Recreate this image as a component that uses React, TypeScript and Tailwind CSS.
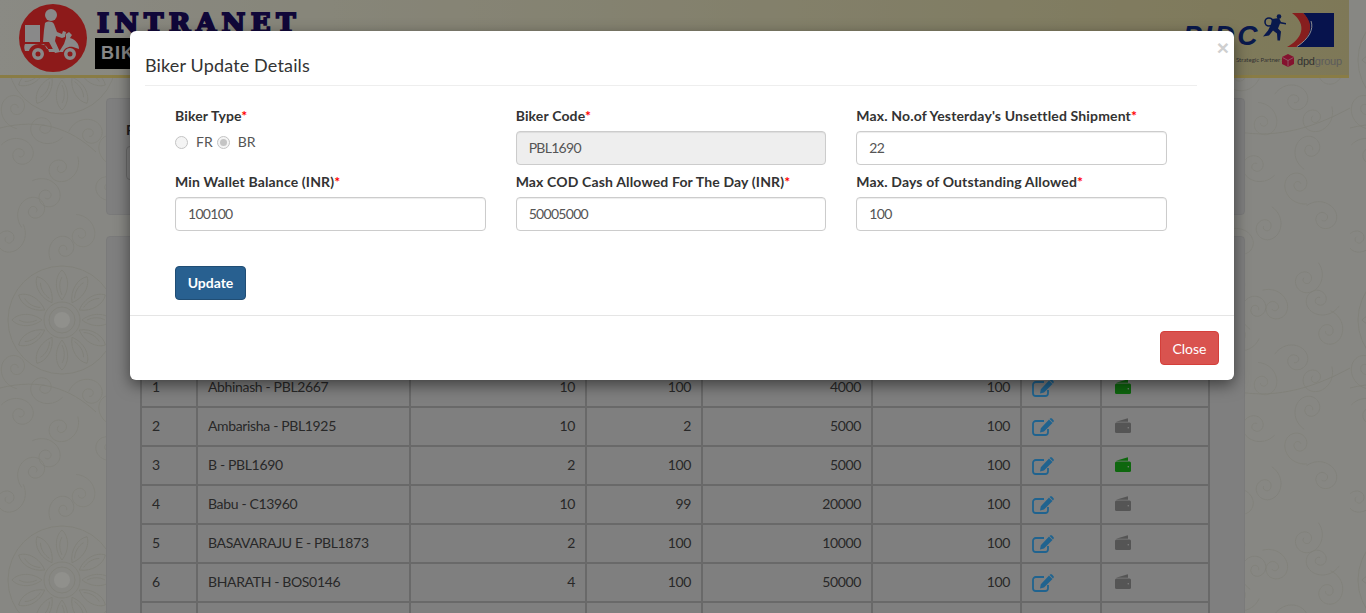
const rows = [
  { no: 1, name: 'Abhinash - PBL2667', a: 10, b: 100, c: 4000, d: 100, active: true },
  { no: 2, name: 'Ambarisha - PBL1925', a: 10, b: 2, c: 5000, d: 100, active: false },
  { no: 3, name: 'B - PBL1690', a: 2, b: 100, c: 5000, d: 100, active: true },
  { no: 4, name: 'Babu - C13960', a: 10, b: 99, c: 20000, d: 100, active: false },
  { no: 5, name: 'BASAVARAJU E - PBL1873', a: 2, b: 100, c: 10000, d: 100, active: false },
  { no: 6, name: 'BHARATH - BOS0146', a: 4, b: 100, c: 50000, d: 100, active: false },
  { no: 7, name: 'BHARATH KUMAR - PBL1702', a: 2, b: 100, c: 5000, d: 100, active: false },
]

const fields = [
  { label: 'Biker Code', value: 'PBL1690', disabled: true },
  { label: "Max. No.of Yesterday's Unsettled Shipment", value: '22' },
  { label: 'Min Wallet Balance (INR)', value: '100100' },
  { label: 'Max COD Cash Allowed For The Day (INR)', value: '50005000' },
  { label: 'Max. Days of Outstanding Allowed', value: '100' },
]

const petals = [0, 30, 60, 90, 120, 150, 180, 210, 240, 270, 300, 330]
const curls = [
  [150, 24, 0], [196, 44, 70], [230, 20, 140], [160, 80, 200], [214, 96, 30], [252, 70, 110],
  [20, 150, 40], [64, 170, 160], [110, 150, 260], [30, 210, 320], [84, 232, 90], [134, 206, 10],
  [176, 170, 220], [226, 150, 300], [190, 226, 120], [244, 214, 50], [130, 110, 170], [12, 110, 280],
  [172, 50, 300], [240, 44, 210], [186, 120, 90], [238, 120, 160], [44, 132, 220], [88, 130, 20],
  [48, 192, 60], [12, 240, 150], [110, 190, 200], [60, 250, 300], [160, 240, 40], [216, 188, 260],
]

function Paisley() {
  return (
    <svg className="absolute inset-0 h-full w-full" aria-hidden="true">
      <defs>
        <pattern id="paisley" width="270" height="260" patternUnits="userSpaceOnUse">
          <g fill="none" stroke="#d4d4c8" strokeWidth="0.8">
            <g transform="translate(62 60)">
              <circle r="8" fill="#f0f0ea" stroke="none" />
              <circle r="13" />
              <circle r="18" />
              {petals.map((p) => (
                <path key={p} transform={`rotate(${p})`} d="M0-20C-8-30-7-44 0-50 7-44 8-30 0-20M0-25C-3-31-3-38 0-43" />
              ))}
              <circle r="54" />
            </g>
            {curls.map(([x, y, r], i) => (
              <path
                key={i}
                transform={`translate(${x} ${y}) rotate(${r}) scale(0.8)`}
                d="M-22 10C-20-12 4-20 15-8 24 3 14 18 2 14-7 11-7-1 2-2 8-3 10 6 4 7"
              />
            ))}
            <path d="M120 150c30 20 40 60 20 110M108 160c28 20 34 56 18 100M0 128c40-10 70 0 96 24M150 130c40 10 80 0 120-22" />
          </g>
        </pattern>
      </defs>
      <rect width="100%" height="100%" fill="#e1e1da" />
      <rect width="100%" height="100%" fill="url(#paisley)" />
    </svg>
  )
}

function EditIcon() {
  return (
    <svg viewBox="0 0 22 18" className="h-[18px] w-[22px] text-[#36a6ee]">
      <path
        d="M16 11v3.200A2.800 2.800 0 0 1 13.200 17H3.800A2.800 2.800 0 0 1 1 14.200V5.800A2.800 2.800 0 0 1 3.800 3H12"
        fill="none"
        stroke="currentColor"
        strokeWidth="1.800"
      />
      <path d="M17 1.500 20.500 5 12 13.500 8 14.500 8.800 10.200zM18 .6c.6-.6 1.400-.6 2 0l1.400 1.400c.6.600.6 1.400 0 2l-.4.4-3.400-3.400z" fill="currentColor" />
    </svg>
  )
}

function WalletIcon({ active }: { active: boolean }) {
  return (
    <svg viewBox="0 0 16 15" className={`h-[15px] w-[16px] ${active ? 'text-[#18ac18]' : 'text-[#8e8e8e]'}`}>
      <path d="M1 3.800 12 .4c.6-.2 1 .1 1 .7v2.700z" fill="currentColor" />
      <rect x="0" y="4.500" width="16" height="10.500" rx="1.500" fill="currentColor" />
      <circle cx="13.300" cy="9.800" r="0.800" fill="#d4d4d4" />
    </svg>
  )
}

function BikerLogo() {
  return (
    <svg viewBox="0 0 68 68" className="h-[68px] w-[68px] shrink-0">
      <circle cx="34" cy="34" r="34" fill="#ec2c2c" />
      <g fill="#e4e4e4">
        <rect x="6" y="21" width="15" height="17" />
        <circle cx="32" cy="11" r="6" />
        <path d="M26 19c3-2 7-2 9 1l3 8 5 2 1-3 3 1-1 5-3 1-6-2-1 5 5 11-5 1-6-11H24l1-12z" />
        <path d="M6 40h19l3 5h9l1 3H30c-1-6-5-8-10-8-5 0-9 3-10 7H6c-1-3-1-5 0-7z" />
        <path d="M47 30l3-2 3 3-2 3c6 2 9 6 9 11l-6-2c-5-1-9 2-10 5h-4l5-8 2-6z" />
        <path fillRule="evenodd" d="M19 44a6 6 0 1 0 0 12 6 6 0 0 0 0-12zm0 3.500a2.500 2.500 0 1 1 0 5 2.500 2.500 0 0 1 0-5zM51 44a6 6 0 1 0 0 12 6 6 0 0 0 0-12zm0 3.500a2.500 2.500 0 1 1 0 5 2.500 2.500 0 0 1 0-5z" />
      </g>
    </svg>
  )
}

function PartnerLogo() {
  return (
    <div className="relative h-[75px] w-[149px] shrink-0">
      <span className="absolute left-[-2px] top-[22px] font-['Liberation_Sans',sans-serif] text-[28px] leading-none font-bold italic tracking-[2.500px] text-[#0f2a80]">
        PIDC
      </span>
      <svg viewBox="0 0 23 27" className="absolute left-[78px] top-[14px] h-[27px] w-[23px]">
        <circle cx="16" cy="2.500" r="2.300" fill="#0f2a80" />
        <circle cx="6" cy="8" r="4" fill="none" stroke="#0f2a80" strokeWidth="1.600" />
        <path d="M9 5l7-1 2 4 5 1v1.500l-6-1-2 5 3 3-1 9h-2.500l-.5-7-4-3-4 5-6 1 5-6 3-6z" fill="#0f2a80" />
      </svg>
      <svg viewBox="0 0 48 34" className="absolute left-[101px] top-[13px] h-[34px] w-[48px]">
        <path d="M17 0H48V34H10C22 26 30 14 17 0z" fill="#0c2080" />
        <path d="M6 0H17C30 12 24 26 10 34H1C16 26 22 12 6 0z" fill="#e23232" />
        <path d="M11 33.500C23 26 28 16 25 8" fill="none" stroke="#ffffff" strokeWidth="0.900" />
      </svg>
      <span className="absolute left-[51px] top-[57px] text-[6px] leading-none whitespace-nowrap text-[#555555]">
        Strategic Partner :
      </span>
      <svg viewBox="0 0 12 13" className="absolute left-[97px] top-[54px] h-[13px] w-[12px]">
        <path d="M6 0l6 3v7l-6 3-6-3V3z" fill="#dc1f4e" />
        <path d="M6 6.500v6M0.500 3.500L6 6.500l5.500-3" fill="none" stroke="#f8d8e0" strokeWidth="0.6" />
      </svg>
      <span className="absolute left-[112px] top-[54px] font-['Liberation_Sans',sans-serif] text-[11px] leading-[14px] tracking-[-0.2px] text-[#555555]">
        dpd<span className="text-[#999999]">group</span>
      </span>
    </div>
  )
}

function Label({ text }: { text: string }) {
  return (
    <label className="mb-[5px] block h-[20px] text-[14px] leading-[20px] font-bold tracking-[0.15px] whitespace-nowrap text-[#333333]">
      {text}
      <span className="text-[#ff0000]">*</span>
    </label>
  )
}

function Field({ label, value, disabled }: { label: string; value: string; disabled?: boolean }) {
  return (
    <div>
      <Label text={label} />
      <input
        readOnly
        value={value}
        className={`block h-[34px] w-full rounded border border-[#cccccc] px-3 pb-px text-[14px] tracking-[-0.7px] text-[#555555] shadow-[inset_0_1px_1px_rgba(0,0,0,0.075)] outline-none ${
          disabled ? 'bg-[#eeeeee]' : 'bg-white'
        }`}
      />
    </div>
  )
}

function Radio({ checked }: { checked?: boolean }) {
  return (
    <span className="flex h-[13px] w-[13px] items-center justify-center rounded-full border border-[#c4c4c4] bg-[#f4f4f4]">
      {checked && <span className="h-[7px] w-[7px] rounded-full bg-[#c4c4c4]" />}
    </span>
  )
}

export default function App() {
  return (
    <div className="relative h-screen overflow-hidden font-['Lato',sans-serif] text-[#333333]">
      <Paisley />

      <div className="relative w-[1349px]">
        <header className="flex h-[78px] items-start justify-between border-b-[3px] border-[#e4cf73] bg-gradient-to-r from-[#e6e6dc] to-[#d2c992] pr-[15px] pl-[19px]">
          <div className="mt-[4px] flex items-start gap-[10px]">
            <BikerLogo />
            <div>
              <div className="mt-[5px] h-[29px] font-['DejaVu_Serif',serif] text-[26px] leading-[29px] font-black tracking-[5.500px] whitespace-nowrap text-[#1c0c60] [-webkit-text-stroke:2px_#1c0c60]">
                INTRANET
              </div>
              <div className="ml-[-2px] h-[31px] w-[220px] bg-black pl-[6px] font-['Liberation_Sans',sans-serif] text-[18px] leading-[31px] font-bold tracking-[1px] text-[#e0e0e0]">
                BIKER
              </div>
            </div>
          </div>
          <PartnerLogo />
        </header>

        <main className="flex flex-col gap-[21px] pt-[20px] pr-[104px] pl-[106px]">
          <section className="h-[117px] rounded-sm border border-[#cccccc] bg-[#d4d4d4] pt-[20px] pl-[19px]">
            <label className="block text-[14px] font-bold">From Date</label>
            <input readOnly className="mt-[6px] h-[34px] w-[300px] rounded border border-[#b0b0b0] bg-[#d8d8d8]" />
          </section>

          <section className="rounded-sm border border-[#cccccc] bg-[#d4d4d4] pt-[91px] pl-[33px]">
            <table className="w-[1068px] table-fixed border-collapse text-[14px] tracking-[-0.35px] text-[#444444]">
              <colgroup>
                <col className="w-[56px]" />
                <col className="w-[213px]" />
                <col className="w-[176px]" />
                <col className="w-[116px]" />
                <col className="w-[170px]" />
                <col className="w-[149px]" />
                <col className="w-[80px]" />
                <col className="w-[108px]" />
              </colgroup>
              <thead>
                <tr className="h-[39px] font-bold">
                  {['#', 'Biker', 'Shipment', 'Wallet', 'COD', 'Days', 'Edit', 'Status'].map((h) => (
                    <th key={h} className="border-2 border-[#b0b0b0] px-[10px] text-left">
                      {h}
                    </th>
                  ))}
                </tr>
              </thead>
              <tbody>
                {rows.map((r) => (
                  <tr key={r.no} className="h-[39px]">
                    <td className="border-2 border-[#b0b0b0] px-[10px] pb-[2px]">{r.no}</td>
                    <td className="border-2 border-[#b0b0b0] px-[10px] pb-[2px]">{r.name}</td>
                    <td className="border-2 border-[#b0b0b0] px-[10px] pb-[2px] text-right">{r.a}</td>
                    <td className="border-2 border-[#b0b0b0] px-[10px] pb-[2px] text-right">{r.b}</td>
                    <td className="border-2 border-[#b0b0b0] px-[10px] pb-[2px] text-right">{r.c}</td>
                    <td className="border-2 border-[#b0b0b0] px-[10px] pb-[2px] text-right">{r.d}</td>
                    <td className="border-2 border-[#b0b0b0] px-[10px]">
                      <EditIcon />
                    </td>
                    <td className="border-2 border-[#b0b0b0] pb-[2px] pl-[13px]">
                      <WalletIcon active={r.active} />
                    </td>
                  </tr>
                ))}
              </tbody>
            </table>
          </section>
        </main>
      </div>

      {/* Modal */}
      <div className="absolute inset-0 flex justify-center bg-black/40 pr-[2px]">
        <div className="relative mt-[31px] h-[349px] w-[1104px] rounded-md bg-white shadow-[0_5px_15px_rgba(0,0,0,0.5)]">
          <span className="absolute top-[6px] right-[5px] font-['Liberation_Sans',sans-serif] text-[21px] leading-[21px] font-bold text-[#cfcfcf]">
            ×
          </span>
          <div className="mr-[37px] ml-[15px] border-b border-[#eeeeee] pt-[23px] pb-[8px]">
            <h4 className="text-[18px] leading-[23px] tracking-[0.15px] text-[#333333]">Biker Update Details</h4>
          </div>

          <div className="h-[230px] border-b border-[#e5e5e5] pt-[20px] pr-[67px] pl-[45px]">
            <div className="grid grid-cols-3 gap-x-[30px] gap-y-[7px]">
              <div>
                <Label text="Biker Type" />
                <div className="mt-[-1px] flex items-center pt-[2px] text-[14px] leading-[20px] text-[#555555]">
                  <Radio />
                  <span className="ml-[8px]">FR</span>
                  <span className="ml-[4px]">
                    <Radio checked />
                  </span>
                  <span className="ml-[8px]">BR</span>
                </div>
              </div>
              {fields.map((f) => (
                <Field key={f.label} label={f.label} value={f.value} disabled={f.disabled} />
              ))}
            </div>
            <button className="mt-[35px] h-[34px] w-[71px] rounded border border-[#204d74] bg-[#286090] pb-[2px] text-[14px] font-bold text-white">
              Update
            </button>
          </div>

          <div className="flex justify-end pt-[15px] pr-[15px]">
            <button className="h-[34px] w-[59px] rounded border border-[#d43f3a] bg-[#d9534f] text-[14px] text-white">
              Close
            </button>
          </div>
        </div>
      </div>
    </div>
  )
}
